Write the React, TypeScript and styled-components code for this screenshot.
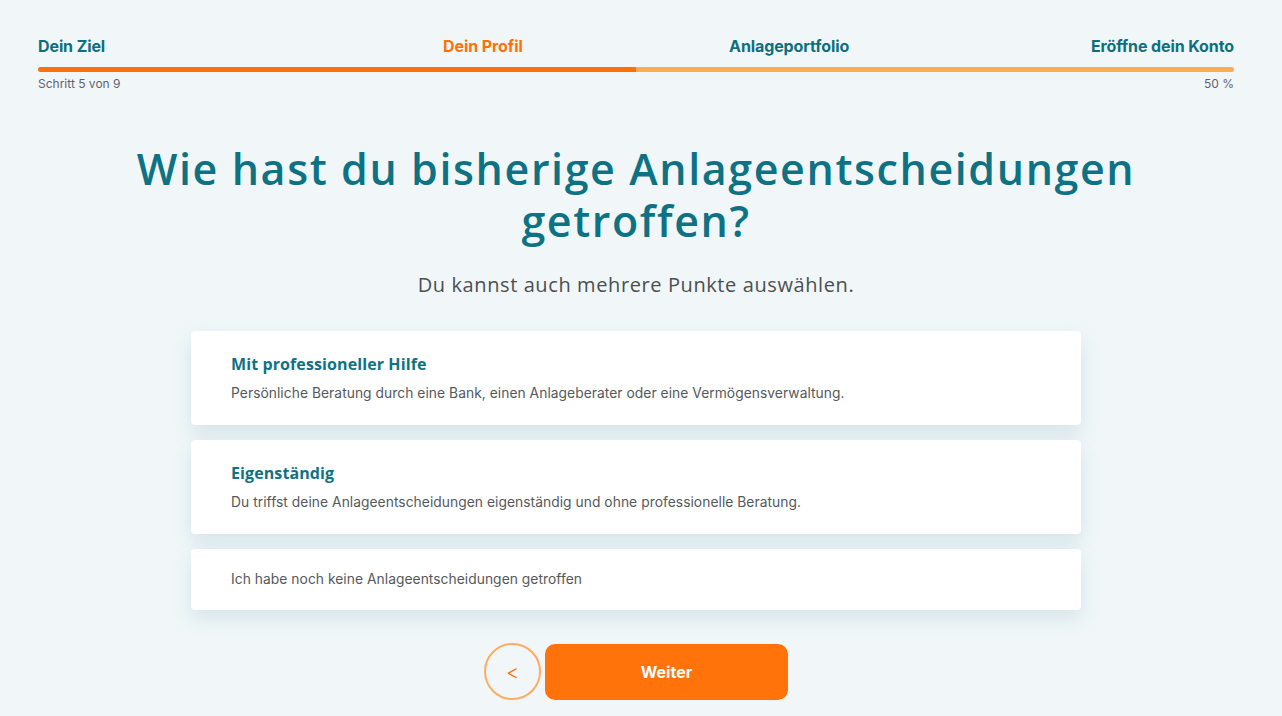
import React, { useState } from 'react';
import styled, { createGlobalStyle } from 'styled-components';

const GlobalStyle = createGlobalStyle`
  html, body {
    margin: 0;
    padding: 0;
    background: #f1f7f9;
  }
  body {
    font-family: 'Inter', 'Liberation Sans', sans-serif;
  }
`;

const Page = styled.div`
  min-height: 716px;
  box-sizing: border-box;
  padding: 37px 48px 0 38px;
`;

const StepLabels = styled.div`
  display: grid;
  grid-template-columns: 24.4% 25.6% 25.6% 24.4%;
  align-items: center;
`;

const StepLabel = styled.span<{ $active?: boolean; $align: string }>`
  justify-self: ${(p) => p.$align};
  font-family: 'Inter', sans-serif;
  font-weight: 700;
  font-size: 16px;
  letter-spacing: -0.1px;
  line-height: 19px;
  color: ${(p) => (p.$active ? '#ff7009' : '#0d6f7e')};
`;

const Track = styled.div`
  margin-top: 11px;
  height: 5px;
  border-radius: 3px;
  background: #ffab55;
  overflow: hidden;
`;

const Fill = styled.div`
  height: 100%;
  background: #ff7009;
  border-radius: 3px 0 0 3px;
`;

const StepInfo = styled.div`
  display: flex;
  justify-content: space-between;
  margin-top: 4px;
  font-size: 12px;
  color: #5d6468;
`;

const Question = styled.h1`
  margin: 52px auto 0;
  max-width: 1040px;
  text-align: center;
  font-family: 'Open Sans', sans-serif;
  font-weight: 600;
  font-size: 43px;
  line-height: 52px;
  letter-spacing: 1.6px;
  color: #0e7285;
`;

const Hint = styled.p`
  margin: 24px 0 0;
  text-align: center;
  font-family: 'Open Sans', sans-serif;
  font-size: 20px;
  letter-spacing: 0.6px;
  color: #4b4f52;
`;

const Options = styled.div`
  width: 890px;
  margin: 33px auto 0;
  display: flex;
  flex-direction: column;
  gap: 15px;
`;

const Card = styled.button<{ $tall?: boolean; $selected?: boolean }>`
  display: flex;
  flex-direction: column;
  justify-content: center;
  gap: 10px;
  height: ${(p) => (p.$tall ? '94px' : '61px')};
  padding: 0 39px 2px;
  border: 1px solid ${(p) => (p.$selected ? '#0e7285' : 'transparent')};
  border-radius: 4px;
  background: #fff;
  box-shadow: 0 8px 20px rgba(110, 160, 175, 0.22);
  text-align: left;
  cursor: pointer;
`;

const CardTitle = styled.span`
  font-family: 'Open Sans', sans-serif;
  font-weight: 700;
  font-size: 16px;
  letter-spacing: 0.1px;
  color: #0e7285;
`;

const CardText = styled.span`
  font-family: 'Inter', sans-serif;
  font-size: 13.8px;
  letter-spacing: 0.05px;
  color: #55595c;
`;

const Actions = styled.div`
  display: flex;
  justify-content: center;
  align-items: center;
  gap: 4px;
  margin-top: 33px;
`;

const BackButton = styled.button`
  width: 57px;
  height: 57px;
  border-radius: 50%;
  border: 2px solid #ffab60;
  background: transparent;
  color: #ff7009;
  font-family: 'Inter', sans-serif;
  font-size: 20px;
  font-weight: 300;
  display: flex;
  align-items: center;
  justify-content: center;
  cursor: pointer;
`;

const NextButton = styled.button`
  width: 243px;
  height: 56px;
  border: none;
  border-radius: 10px;
  background: #ff730a;
  color: #fff;
  font-family: 'Inter', sans-serif;
  font-weight: 700;
  font-size: 16px;
  cursor: pointer;
`;

const options = [
  {
    title: 'Mit professioneller Hilfe',
    text: 'Persönliche Beratung durch eine Bank, einen Anlageberater oder eine Vermögensverwaltung.',
  },
  {
    title: 'Eigenständig',
    text: 'Du triffst deine Anlageentscheidungen eigenständig und ohne professionelle Beratung.',
  },
  { title: '', text: 'Ich habe noch keine Anlageentscheidungen getroffen' },
];

const App: React.FC = () => {
  const [selected, setSelected] = useState<number[]>([]);
  const progress = 50;

  const toggle = (i: number) =>
    setSelected((s) => (s.includes(i) ? s.filter((x) => x !== i) : [...s, i]));

  return (
    <>
      <GlobalStyle />
      <Page>
        <StepLabels>
          <StepLabel $align="start">Dein Ziel</StepLabel>
          <StepLabel $align="center" $active>Dein Profil</StepLabel>
          <StepLabel $align="center">Anlageportfolio</StepLabel>
          <StepLabel $align="end">Eröffne dein Konto</StepLabel>
        </StepLabels>
        <Track>
          <Fill style={{ width: `${progress}%` }} />
        </Track>
        <StepInfo>
          <span>Schritt 5 von 9</span>
          <span>{progress} %</span>
        </StepInfo>

        <Question>Wie hast du bisherige Anlageentscheidungen getroffen?</Question>
        <Hint>Du kannst auch mehrere Punkte auswählen.</Hint>

        <Options>
          {options.map((o, i) => (
            <Card
              key={i}
              $tall={!!o.title}
              $selected={selected.includes(i)}
              onClick={() => toggle(i)}
            >
              {o.title && <CardTitle>{o.title}</CardTitle>}
              <CardText>{o.text}</CardText>
            </Card>
          ))}
        </Options>

        <Actions>
          <BackButton aria-label="Zurück">&lt;</BackButton>
          <NextButton>Weiter</NextButton>
        </Actions>
      </Page>
    </>
  );
};

export default App;
